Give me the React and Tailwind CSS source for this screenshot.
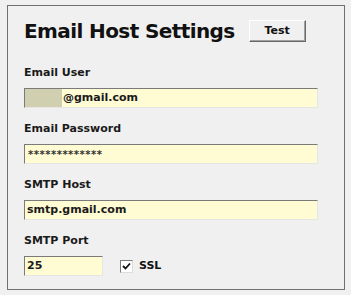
import React from "react";

const font = { fontFamily: '"DejaVu Sans", Verdana, sans-serif' };

function Field({ children, className = "" }) {
  return (
    <div
      className={`h-[20px] bg-[#fffbd2] border border-t-[#7a7a7a] border-l-[#7a7a7a] border-r-[#e6e6e6] border-b-[#e6e6e6] flex items-center text-[11px] font-bold text-[#1a1a1a] ${className}`}
    >
      {children}
    </div>
  );
}

function Label({ children }) {
  return <div className="text-[11px] font-bold text-[#1a1a1a] leading-[13px]">{children}</div>;
}

export default function App() {
  return (
    <div className="w-[351px] h-[295px] bg-[#f0f0f0] pt-[5px] pl-[7px]" style={font}>
      <div className="w-[338px] h-[285px] border border-[#707070] bg-[#f0f0f0] pl-[16px]">
        <div className="flex items-center mt-[14px] h-[22px]">
          <div className="text-[20px] font-bold text-[#111] leading-[22px] tracking-[-0.6px]">Email Host Settings</div>
          <button className="ml-[14px] w-[57px] h-[22px] bg-[#f0f0f0] border border-t-[#ffffff] border-l-[#ffffff] border-r-[#6a6a6a] border-b-[#6a6a6a] shadow-[inset_-1px_-1px_0_#a0a0a0] text-[11px] font-bold text-[#111] flex items-center justify-center">
            Test
          </button>
        </div>
        <div className="mt-[24px]"><Label>Email User</Label></div>
        <Field className="mt-[9px] w-[294px]">
          <div className="w-[37px] h-full bg-[#d0cfb0]" />
          <span className="ml-[1px]">@gmail.com</span>
        </Field>
        <div className="mt-[14px]"><Label>Email Password</Label></div>
        <Field className="mt-[9px] w-[294px]">
          <span className="ml-[3px] text-[10px] tracking-[0.5px] text-[#333]">*************</span>
        </Field>
        <div className="mt-[14px]"><Label>SMTP Host</Label></div>
        <Field className="mt-[9px] w-[294px]">
          <span className="ml-[2px]">smtp.gmail.com</span>
        </Field>
        <div className="mt-[14px]"><Label>SMTP Port</Label></div>
        <div className="flex items-center mt-[9px]">
          <Field className="w-[79px]">
            <span className="ml-[2px]">25</span>
          </Field>
          <div className="ml-[17px] w-[13px] h-[13px] bg-white border border-t-[#7a7a7a] border-l-[#7a7a7a] border-r-[#dcdcdc] border-b-[#dcdcdc] flex items-center justify-center">
            <svg width="9" height="9" viewBox="0 0 9 9">
              <path d="M1 4 L3.5 6.5 L8 1.5" stroke="#111" strokeWidth="1.8" fill="none" />
            </svg>
          </div>
          <span className="ml-[6px] text-[11px] font-bold text-[#111]">SSL</span>
        </div>
      </div>
    </div>
  );
}
